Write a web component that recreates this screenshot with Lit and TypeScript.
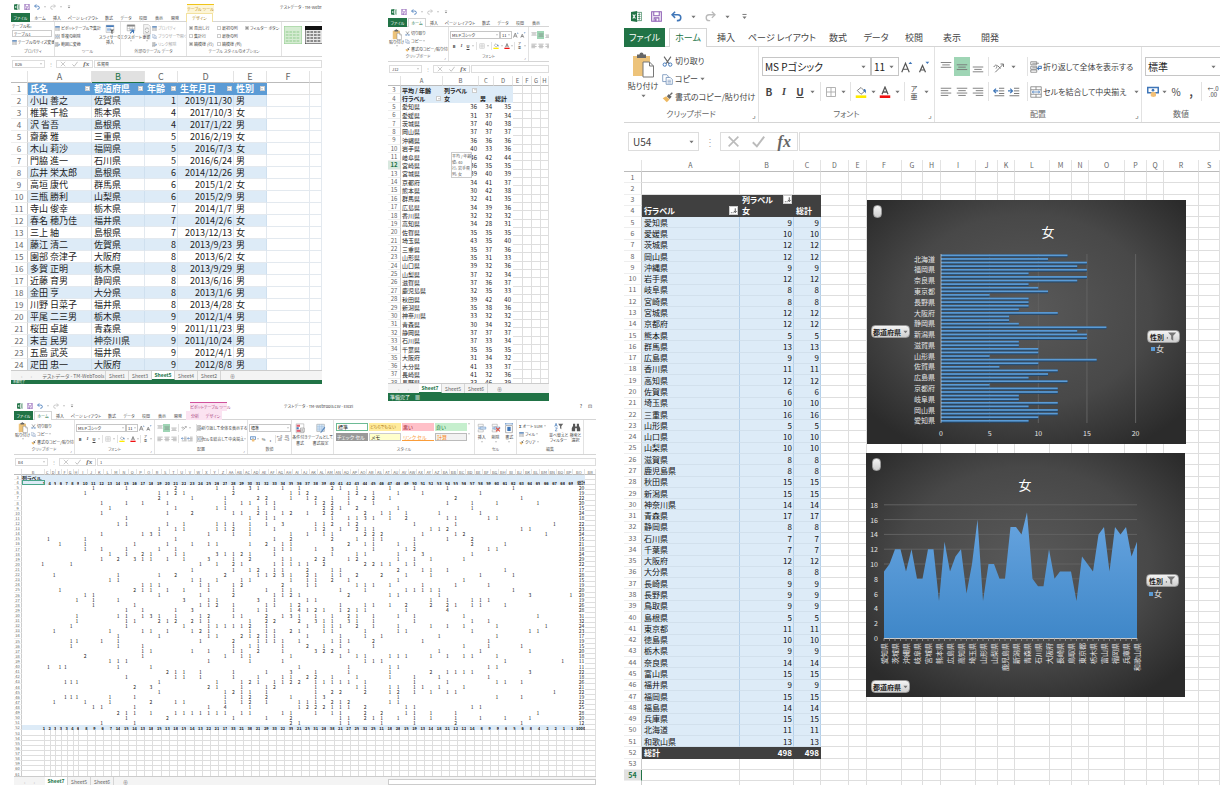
import { LitElement, html, svg, css, nothing } from "lit";
import { customElement } from "lit/decorators.js";
import { classMap } from "lit/directives/class-map.js";

type Person = [string, string, number, string, string];

const people: Person[] = [
  ["小山 善之", "佐賀県", 1, "2019/11/30", "男"],
  ["椎葉 千絵", "熊本県", 4, "2017/10/3", "女"],
  ["沢 省吾", "島根県", 4, "2017/1/22", "男"],
  ["齋藤 雅", "三重県", 5, "2016/2/19", "女"],
  ["木山 莉沙", "福岡県", 5, "2016/7/3", "女"],
  ["門脇 進一", "石川県", 5, "2016/6/24", "男"],
  ["広井 栄太郎", "島根県", 6, "2014/12/26", "男"],
  ["高垣 康代", "群馬県", 6, "2015/1/2", "女"],
  ["三瓶 勝利", "山梨県", 6, "2015/2/9", "男"],
  ["寺山 俊幸", "栃木県", 7, "2014/1/7", "男"],
  ["春名 穂乃佳", "福井県", 7, "2014/2/6", "女"],
  ["三上 紬", "島根県", 7, "2013/12/13", "女"],
  ["藤江 清二", "佐賀県", 8, "2013/9/23", "男"],
  ["園部 奈津子", "大阪府", 8, "2013/6/2", "女"],
  ["多賀 正明", "栃木県", 8, "2013/9/29", "男"],
  ["近藤 育男", "静岡県", 8, "2013/6/16", "男"],
  ["金田 亨", "大分県", 8, "2013/1/6", "男"],
  ["川野 日菜子", "福井県", 8, "2013/4/28", "女"],
  ["平尾 二三男", "栃木県", 9, "2012/1/4", "男"],
  ["桜田 卓雄", "青森県", 9, "2011/11/23", "男"],
  ["末吉 民男", "神奈川県", 9, "2011/10/24", "男"],
  ["五島 武英", "福井県", 9, "2012/4/1", "男"],
  ["疋田 忠一", "大阪府", 9, "2012/8/8", "男"],
];

const women: [string, number][] = [
  ["愛知県", 9], ["愛媛県", 10], ["茨城県", 12], ["岡山県", 12], ["沖縄県", 9], ["岩手県", 12],
  ["岐阜県", 8], ["宮崎県", 8], ["宮城県", 12], ["京都府", 12], ["熊本県", 5], ["群馬県", 13],
  ["広島県", 9], ["香川県", 11], ["高知県", 12], ["佐賀県", 6], ["埼玉県", 10], ["三重県", 16],
  ["山形県", 5], ["山口県", 10], ["山梨県", 10], ["滋賀県", 8], ["鹿児島県", 8], ["秋田県", 15],
  ["新潟県", 15], ["神奈川県", 14], ["青森県", 17], ["静岡県", 8], ["石川県", 7], ["千葉県", 7],
  ["大阪府", 12], ["大分県", 8], ["長崎県", 9], ["長野県", 9], ["鳥取県", 9], ["島根県", 5],
  ["東京都", 11], ["徳島県", 10], ["栃木県", 9], ["奈良県", 14], ["富山県", 15], ["福井県", 9],
  ["福岡県", 15], ["福島県", 14], ["兵庫県", 15], ["北海道", 11], ["和歌山県", 13],
];

const averages = [
  "36 34 35", "31 37 34", "37 40 38", "37 37 37", "36 36 36", "40 33 36", "46 42 44", "36 35 35",
  "39 40 39", "34 41 37", "30 42 38", "32 41 35", "34 39 36", "32 32 32", "34 28 31", "35 35 35",
  "43 35 40", "35 37 36", "35 31 33", "39 32 36", "37 32 34", "37 36 37", "32 35 33", "39 42 40",
  "35 38 36", "33 32 32", "30 34 32", "37 37 37", "37 33 34", "35 35 35", "31 34 32", "41 33 37",
  "41 32 36", "33 46 39",
].map((r) => r.split(" "));

/* One line per prefecture: ages that occur, "age:count" where the count is above one. */
const ageCounts = `11 15 21:2 26 28 30:3 31 34 36 40:2 41 43 47 50 54 62
10 19 20 21:2 22 28:2 35 36 37:2 42 43:2 45 48 51 58
19:2 23 27 31:2 32:2 35 37 38:2 40 42 44:2 45:2 47 55:2 63
12 15 17 20 27 29 30 32 33 38 39:2 40:2 42 45 54 57 60 65
13 21 26 27 31 33 39:2 40:2 41 43:2 48 57
12 20 23:2 28 29 31:2 32 34 35:2 37 39:2 40:2 44:2 46 47 49 53 58
15 30 32 33 40 42 43 44:3 45 47 49:2 54 55 59 60
14 15 20 22 26 27 28 30 32 34:3 38 39 40:2 42 43:2 50 55 67
19 21 22 26 27 28:2 30 33 38 39:2 41 43:2 44 45 52 53 54:2 63 64
12 17 18:3 19 25 28 30 35 37 39 40 44:2 45:2 46:2 51 55 56:2 66
4 10 21 33 35:2 40:2 43 45 46 50 54 57:2
6 10 16 20 23 25 26 30 32:2 34 35 42:2 44 45 48 50 57:2 61
10 12 15 19 21 33 34 35 38 40:3 45 49 50:2 59 60
13 15 17:2 18 21 22 26:3 27 28 29:2 30 33 40 43 44 48 51:3 57
12 14:2 16:3 17 18 20 22 25:3 28 30:2 34 35 38:2 39:2 42 43:2 48 50 52 56
1 8 24 26 28:2 29 33 34 35 36 37 39:2 44:2 45:2 46 47 49 50
23 28 30 31:2 33 34 37:2 40 41 48:2 51 52 54 61
5 14 19 21:2 27:2 31 32 33:2 34:3 35 37:2 38 40 41 43:2 46:2 49 52 58 62
13 14 23 24 26 29 30 35 37 38 40:2 42 48 56
17 18 19 24 25 28 29:2 34:2 37 38 43 44 45 47 51 55 59
6 16:2 17 18 20 22 25 28 32 34 35 41 44 49 50 51 52 53 62
10 11 19 24 28:2 33 34 35:2 36 42:2 47 48 53 64:3 69
9 11 14 22:3 25 26 31:3 33 37 38 52 54 57 58 59
11 16 24 25 26:2 28 32 33 35 36:2 41 44 45 47 49:2 52:2 54:2 55 57 58 61
15 17 21 23:3 28 31 32 35 36:4 37 38:2 39 41 42:2 43 44 49 54:4
9 14 15 17 18:3 19 21 24 25:2 28 29 32:2 34 35:3 36 38 40 42:2 43 45 48 50 56 65
9 15 16 19:2 20 21:2 23:2 24 25 30 32:2 33:2 36:2 38:3 39 40 42:3 43 45 50 57 59
8 15 22 25 26 27 28 29 30:2 32 37 39 40 41 43:2 45 48 52 54 56 60 66
5 13 17 18 20 23 24:2 25 30 32 33 35:2 36 39 40 44 48 49 57 64 65
14 19 25 26 29:2 30 31:2 32 33 37 41 44 46 53 60
8 9 12 14 24 28:2 31 32 33 34 36 40 41 42 45:2 51 59
8 14 17 28 30 31 34 37:2 39 41 45 56 59 63
17 18 23 25 28 29 31:2 34 38:3 39:2 40:2 42 53 58 64
10:2 17 27 29 30 35 41 43 44 47 48 49 52 54 56 57 60
13 14 15 25 30 34 44 45 46 61 68
4 6 7 14 18 36 42 47 48 59 60
20:2 21 22 24 28 32 35:3 38 42 47 52:2 54 55 56 57 64:3
15 21 22 24 28 31 34 35 37:2 38:2 40 43 47 50 53 59
7 8 9 19 26 29 30:2 31 33 34 35:2 36:2 38 39 40 41 42 44 50 54 60 61 63
16:2 18:3 25:2 26 29 32 33:2 38 43 44 47 48 50 51 53 56
19 27 28:2 29 30 32 38 40:2 41:2 44:2 47 48:2 50 52 54 55 67
7 8 9 13 16 27 29 30:2 32:2 35 38 39:3 48 60 63
5 10 13 18:2 21 22 27 29 30:2 32 36 37 38 40:2 41 42:2 47 48
11 12 16 25 27:4 30 36 37:2 38:2 39:2 40 41 42 44:2 49 50 57 58
14:2 15 16 18 21 22 23 24 25 26 27 29 30 34 35 38 40 41 44:2 46:2 49 50 52 55 65
15 20:2 28 32 35:2 41 42 44:2 45 46 48 50 52 55 58 61 64
12 16 35:2 36 41 42 46 50 55:2 63`
  .split("\n")
  .map((line) => new Map(line.split(" ").map((t) => {
    const [a, n] = t.split(":");
    return [Number(a), Number(n ?? 1)] as [number, number];
  })));

const ages = [1, ...Array.from({ length: 66 }, (_, i) => i + 4)];
const ageTotals =
  "1 2 3 3 3 4 6 8 9 6 7 14 15 14 13 18 15 13 18 15 14 13 22 21 17 33 21 38 21 29 33 22 35 21 25 31 28 38 21 27 25 32 25 11 18 28 15 19 13 14 18 21 12 12 14 8 9 9 6 5 6 8 4 2 2 1 1".split(" ");

const letter = (n: number): string =>
  n < 26 ? String.fromCharCode(65 + n) : letter(Math.floor(n / 26) - 1) + String.fromCharCode(65 + (n % 26));

const range = (from: number, to: number) => Array.from({ length: to - from + 1 }, (_, i) => from + i);

const pct = (weights: number[]) => {
  const sum = weights.reduce((a, b) => a + b, 0);
  return html`<colgroup>${weights.map((w) => html`<col style="width:${(w / sum) * 100}%">`)}</colgroup>`;
};

/* ---------- icons ---------- */
const ic = (body: unknown, cls = "") =>
  html`<svg class="ic ${cls}" viewBox="0 0 16 16" aria-hidden="true">${body}</svg>`;
const caret = html`<svg class="caret" viewBox="0 0 6 4" aria-hidden="true"><path d="M0.5 0.5h5L3 3.5z" fill="#777"/></svg>`;
const I = {
  excel: ic(svg`<path d="M0 1.5 9 0v16L0 14.5z" fill="#217346"/><path d="M9 2h6.5v12H9" fill="#fff" stroke="#217346"/><path d="M10 5h4M10 8h4M10 11h4M12 3v10" stroke="#217346" stroke-width=".9"/><path d="m2.6 5 3.8 6M6.4 5l-3.8 6" stroke="#fff" stroke-width="1.5"/>`),
  save: ic(svg`<path d="M1 1h14v14H1z" fill="#fff" stroke="#8e5fb5" stroke-width="1.6"/><path d="M4 1v6h8V1M4.5 15v-5h7v5" fill="none" stroke="#8e5fb5" stroke-width="1.5"/><path d="M6 11h2v4H6z" fill="#8e5fb5"/>`),
  undo: ic(svg`<path d="M2 5.5h8a4.2 4.2 0 0 1 0 8.500H8.500" fill="none" stroke="#3f76b8" stroke-width="2.200"/><path d="M6 1 1.500 5.500 6 10" fill="none" stroke="#3f76b8" stroke-width="2.200"/>`),
  redo: ic(svg`<path d="M14 5.500H6a4.200 4.200 0 0 0 0 8.500h1.500" fill="none" stroke="#b9b9b9" stroke-width="2"/><path d="m10 1 4.500 4.500L10 10" fill="none" stroke="#b9b9b9" stroke-width="2"/>`),
  more: ic(svg`<path d="M5 5h6" stroke="#777" stroke-width="1.400"/><path d="M5 8h6l-3 3.500z" fill="#777"/>`),
  paste: html`<svg class="big" viewBox="0 0 22 26" aria-hidden="true"><path d="M1 4h17v20H1z" fill="#edc37a"/><path d="M5 2.500h2.500a2 2 0 0 1 4 0H14V6H5z" fill="#666"/><path d="M11 10h6.500l4 4v11H11z" fill="#fff" stroke="#777"/><path d="M17.500 10v4h4" fill="none" stroke="#777"/></svg>`,
  cut: ic(svg`<path d="m3 1 7 10M13 1 6 11" stroke="#666" stroke-width="1.600"/><circle cx="4" cy="12.500" r="2.400" fill="none" stroke="#3f76b8" stroke-width="1.400"/><circle cx="12" cy="12.500" r="2.400" fill="none" stroke="#3f76b8" stroke-width="1.400"/>`),
  copy: ic(svg`<path d="M1 1h6l2 2v8H1z" fill="#fff" stroke="#5b7fae"/><path d="M6 5h6l3 3v7H6z" fill="#fff" stroke="#5b7fae"/><path d="M8 9h5M8 11h5M8 13h5" stroke="#5b7fae" stroke-width=".8"/>`),
  brush: ic(svg`<path d="m1 9 5-3 5 5-4 4z" fill="#edb860"/><path d="m7 6 3-3 4 4-3 3z" fill="#666"/><path d="m12 4 3-3" stroke="#666" stroke-width="2"/>`),
  grow: ic(svg`<path d="m1 15 5-12 5 12M3 11h6" fill="none" stroke="#555" stroke-width="1.600"/><path d="m10 4 2.500-3L15 4z" fill="#3f76b8"/>`),
  shrink: ic(svg`<path d="m2 15 4-9 4 9M3.500 12h5" fill="none" stroke="#555" stroke-width="1.600"/><path d="m10 1 2.500 3L15 1z" fill="#3f76b8"/>`),
  border: ic(svg`<path d="M2 2h12v12H2zM8 2v12M2 8h12" fill="none" stroke="#aaa" stroke-width="1.200"/>`),
  fill: ic(svg`<path d="m3 6 5-4 5 5-5 4z" fill="#fff" stroke="#777" stroke-width="1.200"/><path d="M12 4c3 0 3 3 2 6-1-2-1-3-3-3z" fill="#3f76b8"/><path d="M1 12.500h14V16H1z" fill="#ffeb00"/>`),
  color: ic(svg`<path d="m4 11 4-9.500L12 11M5.500 8h5" fill="none" stroke="#555" stroke-width="1.700"/><path d="M1 12.500h14V16H1z" fill="#f01010"/>`),
  al: (y: number, kind: string) => ic(svg`<path d=${[0, 1, 2, 3].slice(0, kind === "v" ? 3 : 4).map((k) => { const s = k % 2; const x = kind === "r" ? 1 + s * 4 : kind === "l" ? 1 : 1 + s * 2; return `M${x} ${y + k * 3.2}h${14 - s * 4}`; }).join("")} stroke="#777" stroke-width="1.200"/>`),
  orient: ic(svg`<path d="M1 8c3-5 6-2 3 2M6 6l4 4M3 15 14 4M14 4h-4M14 4v4" fill="none" stroke="#777" stroke-width="1.300"/>`),
  outdent: ic(svg`<path d="M8 3h7M8 6.500h7M8 10h7M2 13h13" stroke="#777" stroke-width="1.300"/><path d="M7 6.500H1M4 3.500l-3 3 3 3" fill="none" stroke="#3f76b8" stroke-width="1.600"/>`),
  indent: ic(svg`<path d="M8 3h7M8 6.500h7M8 10h7M2 13h13" stroke="#777" stroke-width="1.300"/><path d="M0 6.500h6M3 3.500l3 3-3 3" fill="none" stroke="#3f76b8" stroke-width="1.600"/>`),
  wrap: ic(svg`<path d="M1 1h8v4H1zM1 7h8v4H1zM1 12h8v3H1z" fill="none" stroke="#777"/><path d="M3 3h9M3 9h6" stroke="#777"/><path d="M11 7h4v3h-5M12 8l-2 2 2 2" fill="none" stroke="#3f76b8" stroke-width="1.400"/>`),
  merge: ic(svg`<path d="M1 1h14v14H1zM1 5h14M1 11h14M8 1v4M8 11v4" fill="none" stroke="#777"/><path d="M3 8h10M5 6.500 3 8l2 1.500M11 6.500 13 8l-2 1.500" fill="none" stroke="#3f76b8"/>`),
  money: ic(svg`<path d="M1 2h14v7H1z" fill="#fff" stroke="#3f76b8" stroke-width="2"/><circle cx="8" cy="5.500" r="1.800" fill="#3f76b8"/><path d="M5 9c0-1.500 7-1.500 7 0v4c0 2-7 2-7 0z" fill="#f2c078"/>`),
  filter: ic(svg`<path d="M3 2h12l-4.500 5v7l-3-2V7z" fill="#777"/><circle cx="2" cy="10" r="1" fill="#555"/>`),
  grid: ic(svg`<path d="M1 1h14v14H1z" fill="#fff" stroke="#888"/><path d="M1 1h14v4H1z" fill="#3f76b8"/><path d="M1 8h14M1 11.500h14M6 5v10M11 5v10" stroke="#999"/>`),
  slicer: html`<svg class="big" viewBox="0 0 22 26" aria-hidden="true"><path d="M2 3h18v17H2z" fill="#fff" stroke="#888"/><path d="M2 3h18v4H2z" fill="#3f76b8"/><path d="M4 10h10M4 13h10M4 16h8" stroke="#8ab0dc" stroke-width="2"/><path d="M11 13h10l-4 5v6l-3-2v-4z" fill="#666"/></svg>`,
  export: html`<svg class="big" viewBox="0 0 22 26" aria-hidden="true"><path d="M2 2h18v14H2z" fill="#fff" stroke="#777"/><path d="M2 2h18v4H2z" fill="#888"/><path d="M2 11h18M8 6v10M14 6v10" stroke="#999"/><path d="M9 14h8v8M9 22l8-8" fill="none" stroke="#3f76b8" stroke-width="2.500"/></svg>`,
  refresh: html`<svg class="big" viewBox="0 0 22 26" aria-hidden="true"><path d="M3 1h11l5 5v18H3z" fill="#f3f3f3" stroke="#bbb" stroke-width="1.500"/><path d="M7 14a4 4 0 0 1 8-1M15 16a4 4 0 0 1-8 1" fill="none" stroke="#aaa" stroke-width="2"/></svg>`,
  cond: html`<svg class="big" viewBox="0 0 22 26" aria-hidden="true"><path d="M2 2h18v21H2z" fill="#fff" stroke="#888"/><path d="M3 4h8v5H3z" fill="#e06070"/><path d="M3 10h5v5H3z" fill="#3f76b8"/><path d="M3 16h10v5H3z" fill="#e06070"/><path d="M12 12h9v9h-9z" fill="#fff" stroke="#555"/><path d="M14 15h5M14 18h5" stroke="#555"/></svg>`,
  brushTable: html`<svg class="big" viewBox="0 0 22 26" aria-hidden="true"><path d="M1 3h18v17H1z" fill="#dcebf7" stroke="#888"/><path d="M1 8h18M1 12h18M1 16h18M7 3v17M13 3v17" stroke="#8ab0dc"/><path d="m9 24 4-2 8-11-2-2-8 11z" fill="#5b8ac0"/></svg>`,
  cells: (x: boolean) => html`<svg class="big" viewBox="0 0 22 26" aria-hidden="true"><path d="M2 3h12v5H2zM2 16h12v5H2z" fill="#fff" stroke="#888"/><path d="M7 9.500h13v5H7z" fill="#d6e5f5" stroke="#3f76b8"/><path d="M2 12h4" stroke="#3f76b8" stroke-width="2"/>${x ? svg`<path d="m11 11 9 9M20 11l-9 9" stroke="#e04b3c" stroke-width="2.500"/>` : nothing}</svg>`,
  format: html`<svg class="big" viewBox="0 0 22 26" aria-hidden="true"><path d="M3 6h16v17H3z" fill="#fff" stroke="#888" stroke-width="1.500"/><path d="M7 9h8v10H7z" fill="#3f76b8"/><path d="M3 2h16M3 0v4M19 0v4" stroke="#3f76b8" stroke-width="1.500"/></svg>`,
  sort: html`<svg class="big" viewBox="0 0 22 26" aria-hidden="true"><path d="m1 11 3-8 3 8M2 8h4M2 14h5l-5 7h5" fill="none" stroke="#3f76b8" stroke-width="1.500"/><path d="M9 4h12l-4.500 6v7l-3-2v-5z" fill="#666"/></svg>`,
  find: html`<svg class="big" viewBox="0 0 22 26" aria-hidden="true"><path d="M4 4h5v5l1 2h2l1-2V4h5v5l3 6v7h-8v-7h-4v7H1v-7l3-6z" fill="#555"/></svg>`,
  x: ic(svg`<path d="m2 2 12 12M14 2 2 14" stroke="#bbb" stroke-width="2"/>`),
  ok: ic(svg`<path d="m1 9 5 5L15 2" fill="none" stroke="#bbb" stroke-width="2.400"/>`),
  sorted: ic(svg`<path d="M2 13h2M6 13h2M12 3v8M9 9l3 4 3-4" fill="none" stroke="#444" stroke-width="2"/>`),
};

@customElement("app-root")
export class AppRoot extends LitElement {
  static styles = css`
    :host { display: block; background: #fff; font-family: "Noto Sans CJK JP", "Noto Sans", sans-serif; color: #444; font-feature-settings: "palt"; }
    * { box-sizing: border-box; }
    button, input, select { font: inherit; font-feature-settings: inherit; color: inherit; background: none; border: 0; margin: 0; padding: 0; min-width: 0; border-radius: 0; appearance: none; display: block; }
    button { display: flex; align-items: center; justify-content: center; white-space: nowrap; }
    .page { display: grid; grid-template-columns: minmax(0, 1fr) minmax(0, 1fr); gap: 28px; overflow: hidden; }
    .top { display: grid; grid-template-columns: minmax(0, 311fr) minmax(0, 161fr); gap: 66px; padding: 0 47px 0 11px; height: 401px; align-items: start; }
    .two { padding-top: 5px; }
    .three { padding-left: 14px; }
    .win { overflow: hidden; font-size: 4px; line-height: 6px; position: relative; }
    .four { padding-top: 5px; font-size: 8px; line-height: 12px; }
    .ic { width: 6px; height: 6px; flex: none; display: block; }
    .big { width: 10px; height: 11px; display: block; flex: none; }
    .caret { width: 2px; height: 2px; flex: none; display: block; }
    .lines .ic { width: 5px; height: 5px; }
    .four .ic { width: 11px; height: 11px; }
    .four .big { width: 22px; height: 26px; }
    .four .caret { width: 5px; height: 4px; }

    /* title row */
    .quick { display: grid; grid-template-columns: 176px auto minmax(0, 1fr); height: 13px; align-items: center; }
    .three .quick { height: 10px; }
    .four .quick { height: 23px; grid-template-columns: 176px; }
    .qi { display: flex; gap: 4px; padding-left: 3px; align-items: center; }
    .four .qi { gap: 9px; padding-left: 7px; }
    .ctx { align-self: end; height: 9px; width: 27px; border-top: 1px solid #f0c419; background: #fdf5d6; color: #b8860b; text-align: center; white-space: nowrap; line-height: 8px; }
    .three .ctx { width: 37px; border-color: #d0529c; background: #fbe3f1; color: #a8407c; }
    .title { white-space: nowrap; padding-left: 66px; display: flex; }
    .three .title { padding-left: 57px; justify-content: space-between; }
    .wc { display: flex; gap: 6px; padding-right: 4px; font-size: 5px; }

    /* ribbon tabs */
    .tabs { display: flex; height: 9px; border-bottom: 1px solid #d5d5d5; }
    .tabs button { flex: none; height: 9px; width: 16px; }
    .tabs .w18 { width: 18px; }
    .tabs .w36 { width: 36px; }
    .tabs .file { background: #217346; color: #fff; width: 19px; margin-right: 1px; }
    .tabs .on { background: #fff; color: #217346; border: 1px solid #d5d5d5; border-bottom: 0; }
    .tabs .gold { color: #a87b00; width: 27px; border-color: #f3e2a0; margin-left: 3px; }
    .tabs .pink { background: #fbe3f1; width: 18px; color: #a8407c; }
    .four .tabs { height: 19px; font-size: 9px; }
    .four .tabs button { height: 19px; width: 38px; }
    .four .tabs .w36 { width: 74px; }
    .four .tabs .w18 { width: 38px; }
    .four .tabs .file { width: 41px; margin-right: 4px; }

    /* ribbon */
    .ribbon { display: flex; height: 35px; border-bottom: 1px solid #d5d5d5; }
    .four .ribbon { height: 76px; }
    .group { flex: none; display: flex; flex-direction: column; border-right: 1px solid #e2e2e2; position: relative; overflow: hidden; }
    .group > .body { flex: 1; min-height: 0; }
    .cap { height: 8px; text-align: center; color: #666; white-space: nowrap; }
    .four .cap { height: 14px; }
    .cap.launch::after { content: "⌟"; position: absolute; right: 2px; bottom: 1px; }
    .clip { width: 61px; } .font { width: 80px; } .align { width: 93px; } .num { width: 44px; }
    .four .clip { width: 135px; } .four .font { width: 176px; } .four .align { width: 207px; } .four .num { width: auto; flex: 1; border: 0; }
    .clip .body { display: grid; grid-template-columns: 17px 1fr; padding-top: 2px; }
    .four .clip .body { grid-template-columns: 38px 1fr; padding-top: 5px; }
    .tall { flex-direction: column; justify-content: flex-start; line-height: 5px; }
    .four .tall { gap: 2px; line-height: 12px; }
    .lines { display: grid; grid-auto-rows: 8px; align-content: start; min-width: 0; }
    .lines button, .lines label { display: flex; gap: 1px; align-items: center; justify-content: flex-start; white-space: nowrap; }
    .four .lines { grid-auto-rows: 18px; }
    .four .lines button { gap: 2px; }
    .rows { display: grid; grid-auto-rows: 8px; gap: 3px; padding: 4px 0 0 1px; align-content: start; }
    .four .rows { grid-auto-rows: 19px; gap: 6px; padding: 10px 0 0 3px; }
    .r { display: grid; align-items: center; justify-items: center; }
    .r > * { height: 100%; }
    .r .ic { height: 6px; } .r > .caret { height: 2px; }
    .four .r .ic { height: 12px; width: 12px; } .four .r > .caret { height: 4px; }
    .f1 { grid-template-columns: 50px 12px 8px 6px; }
    .f2 { grid-template-columns: 8px 7px 6px 4px 3px 8px 4px 2px 8px 3px 7px 3px 3px 7px 4px; }
    .four .f1 { grid-template-columns: 109px 28px 16px 17px; }
    .four .f2 { grid-template-columns: 14px 16px 16px 9px 6px 16px 8px 6px 16px 8px 16px 8px 6px 14px 10px; }
    .a { grid-template-columns: 7px 7px 7px 3px 7px 6px 2px 2px 5px 40px 5px; }
    .four .a { grid-template-columns: 16px 16px 16px 5px 15px 15px 5px 3px 14px 88px 1fr; }
    .a .t { justify-self: start; }
    .n1 { grid-template-columns: 1fr; }
    .n2 { grid-template-columns: 7px 4px 7px 7px 2px 7px 7px; }
    .four .n2 { grid-template-columns: 16px 6px 18px 12px 8px 16px; }
    .four .n2 > :nth-child(7) { display: none; }
    .dec { line-height: 3px; font-size: 3px; flex-direction: column; }
    .four .dec { line-height: 6px; font-size: 6px; }
    .sep { border-left: 1px solid #e2e2e2; }
    .green { background: #9fd5b5; width: 100%; }
    .sel { display: grid; width: 100%; align-items: center; border: 1px solid #c6c6c6; position: relative; background: #fff; color: #222; }
    .sel select { width: 100%; height: 100%; padding-left: 1px; line-height: normal; }
    .sel .caret { position: absolute; right: 1px; }
    .four .sel { font-size: 10px; } .four .sel select { padding-left: 2px; } .four .sel .caret { right: 4px; }
    .b { font-weight: 700; } .it { font-style: italic; font-weight: 700; font-family: "Liberation Serif", serif; } .un { text-decoration: underline; font-weight: 700; }
    .ruby { line-height: 4px; flex-direction: column; font-size: 3px; }
    .four .ruby { line-height: 8px; font-size: 7px; }
    .four .f2 .b, .four .f2 .it, .four .f2 .un, .four .n2 button:not(.dec) { font-size: 10px; }

    /* extra groups */
    .g44 { width: 44px; padding-left: 1px; } .g66 { width: 66px; } .g95 { width: 95px; }
    .g44 input { border: 1px solid #ccc; height: 7px; width: 40px; padding-left: 1px; }
    .split { display: grid; padding-top: 2px; }
    .s1 { grid-template-columns: 45px 20px; } .s2 { grid-template-columns: 20px 11px 34px; } .s3 { grid-template-columns: 28px 28px 1fr; padding-left: 2px; }
    .dim { color: #aaa; }
    .ck { appearance: none; width: 4px; height: 4px; border: 1px solid #ccc; flex: none; }
    .ck:checked { background: #999; }
    .thumbs { display: flex; gap: 3px; padding: 4px 0 0 2px; flex: 1; overflow: hidden; }
    .th { width: 18px; height: 18px; flex: none; }
    .cf { width: 42px; } .cf .body, .cl .body { display: flex; padding-top: 3px; }
    .cf .tall, .cl .tall { flex: 1; gap: 1px; }
    .cf .tall:first-child { flex: none; width: 16px; }
    .sty { width: 141px; }
    .gallery { display: grid; grid-template-columns: repeat(4, 32px) 5px; grid-auto-rows: 8px; gap: 2px 1px; padding: 3px 0 0 2px; font-size: 5px; }
    .gallery button { justify-content: flex-start; padding-left: 1px; }
    .gallery .gy { font-size: 4px; }
    .gn { border: 1px solid #6dbb95; color: #222; } .gy { background: #ffeb9c; color: #b07b20; } .gr { background: #ffc0c8; color: #a02030; } .gg { background: #c6efce; color: #1c7a36; }
    .gc { background: #999; color: #fff; } .gm { background: #ffffcc; color: #222; border: 1px solid #ccc; } .gl { color: #fa9d3a; border-bottom: 1px solid #fa9d3a; } .gk { background: #f2f2f2; border: 1px solid #bbb; color: #fa7d00; }
    .cl { width: 42px; } .ed { width: 67px; }
    .ed .body { display: grid; grid-template-columns: 30px 19px 1fr; padding: 2px 0 0 2px; }

    /* formula bar */
    .fx { display: grid; grid-template-columns: 33px 9px 37px minmax(0, 1fr); gap: 1px; padding: 3px 0 3px 1px; height: 14px; }
    .fx > * { border: 1px solid #ddd; height: 8px; }
    .fx > .dots { border: 0; display: grid; place-items: center; color: #aaa; }
    .fx .name { position: relative; display: grid; align-items: center; }
    .fx .name .caret { position: absolute; right: 2px; }
    .fx input { padding-left: 2px; width: 100%; height: 100%; line-height: 6px; }
    .fx > input { height: 8px; }
    .btns { display: flex; align-items: center; justify-content: space-around; }
    .f { font-style: italic; font-family: "Liberation Serif", serif; font-size: 7px; font-weight: 700; color: #666; }
    .four .fx { grid-template-columns: 71px 19px 78px minmax(0, 1fr); padding: 9px 0 9px 4px; height: 37px; font-size: 10px; }
    .four .fx > * { height: 19px; }
    .four .btns .ic { width: 13px; height: 13px; } .four .f { font-size: 16px; }
    .four .fx .caret { right: 4px; } .four .fx input { padding-left: 4px; }

    /* sheets */
    .view { overflow: hidden; position: relative; }
    table { border-spacing: 0; table-layout: fixed; width: 100%; }
    th, td { padding: 0; white-space: nowrap; overflow: hidden; text-align: left; font-weight: 400; }
    .sheet td { border-right: 1px solid #dedede; border-bottom: 1px solid #dedede; color: #222; }
    .sheet thead th { text-align: center; border-right: 1px solid #e3e3e3; border-bottom: 1px solid #bbb; color: #666; }
    .sheet tbody th { text-align: center; border-right: 1px solid #ccc; border-bottom: 1px solid #eee; color: #666; }
    .sheet td.n { text-align: right; }
    .v1 { height: 299px; }
    .v1 table { font-size: 9px; line-height: 11px; color: #222; }
    .v1 tr { height: 12px; } .v1 th { font-size: 8px; }
    .v1 thead th { font-size: 9px; }
    .v1 td { padding: 0 1px 0 2px; border-color: #e3e9ef; }
    .v1 .hd td { background: #5b9bd5; color: #fff; font-weight: 700; border-color: #5b9bd5; }
    .v1 .hd td.p { background: #fff; border-color: #e3e3e3; }
    .v1 .z td:not(.p) { background: #ddebf7; border-right-color: #cfe0ef; }
    .v1 thead .cur { background: #e1e1e1; color: #217346; border-bottom-color: #217346; }
    .cell { display: flex; justify-content: space-between; align-items: center; }
    .dd { width: 5px; height: 5px; background: #fff; display: grid; place-items: center; border: 1px solid #ccc; flex: none; }
    .v2 { height: 307px; }
    .v2 table { height: 311px; font-size: 6px; line-height: 7px; }
    .v2 thead tr { height: 10px; }
    .v2 th { font-size: 6px; }
    .v2 td.q { border: 0; padding: 0 2px 0 1px; } .v2 .pv td.q { background: #ddebf7; font-weight: 700; }
    .v2 tbody .cur { background: #d8e8df; color: #217346; font-weight: 700; }
    .tip { position: absolute; left: 63px; top: 76px; background: #fff; border: 1px solid #ccc; font-size: 4px; line-height: 6px; white-space: nowrap; color: #555; }
    .v3 { height: 307px; }
    .v3 table { height: 308px; font-size: 5px; line-height: 4px; }
    .v3 thead tr { height: 6px; }
    .v3 td { text-align: right; padding-right: 1px; } .v3 td.q { border: 0; }
    .v3 .pv td.q { background: #ddebf7; font-weight: 700; padding-right: 0; } .v3 .pv td.lb { text-align: left; }
    .v3 .pv td { font-size: 4px; } .v3 .pv td.lb { font-size: 5px; overflow: visible; }
    .v3 th, .v3 thead th { font-size: 4px; }
    .v3 td.act { background: #cdeee6; outline: 1px solid #4aa58a; outline-offset: -1px; }
    .v4 { height: 625px; }
    .v4 table { height: 633px; font-size: 8px; line-height: 9px; }
    .v4 thead tr { height: 12px; }
    .v4 th { font-size: 7px; }
    .v4 td.q { padding: 0 1px 0 2px; background: #ddebf7; border-color: #b4d0ea; border-bottom-color: #d2e0ec; color: #111; }
    .v4 .pv td.q { background: #404040; color: #fff; font-weight: 700; border-color: #404040; }
    .v4 .dd { width: 9px; height: 9px; }
    .v4 .dd .ic { width: 7px; height: 7px; }
    .v4 tbody .cur { background: #e1e1e1; color: #217346; font-weight: 700; border-right-color: #217346; }
    .chart { position: absolute; left: 243px; width: 319px; height: 244px; margin: 0; }
    .c1 { top: 40px; } .c2 { top: 293px; left: 242px; }
    .chart svg.plot { display: block; width: 319px; height: 244px; }
    .chart button { position: absolute; background: linear-gradient(#f4f4f4, #cfcfcf); border: 1px solid #999; border-radius: 4px; color: #222; font-size: 7px; font-weight: 700; height: 13px; gap: 2px; }
    .pill { left: 6px; top: 5px; width: 9px; }
    .k1 { left: 4px; top: 125px; width: 39px; } .k2 { left: 5px; top: 227px; width: 39px; }
    .l1 { left: 280px; top: 130px; width: 33px; } .l2 { left: 280px; top: 121px; width: 33px; }
    .chart text { fill: #e4e4e4; font-size: 7px; } .chart .ti { font-size: 13px; fill: #fff; } .chart .lg { font-size: 8px; }

    /* sheet tabs and status */
    .st { display: flex; height: 10px; background: #f4f4f4; border-top: 1px solid #ccc; align-items: stretch; font-size: 5px; color: #666; }
    .st button { width: 23px; border-right: 1px solid #d5d5d5; flex: none; }
    .st .nav { width: 31px; border: 0; gap: 8px; color: #bbb; }
    .st .long { width: 64px; }
    .st .on { background: #fff; color: #217346; font-weight: 700; border-bottom: 1px solid #217346; }
    .st .add { border: 0; }
    .bar { flex: 1; margin: 2px 0 1px auto; max-width: 208px; border: 1px solid #ccc; background: #fff; }
    .status { background: #217346; color: #fff; height: 8px; padding-left: 2px; line-height: 8px; font-size: 5px; }
    .one .status { height: 4px; line-height: 4px; font-size: 3px; }
  `;

  private quick(extra: unknown = nothing) {
    return html`<header class="quick"><div class="qi">${I.excel}${I.save}${I.undo}${caret}${I.redo}${caret}${I.more}</div>${extra}</header>`;
  }

  private tabs(names: string[], on: string, extra: unknown = nothing) {
    const w: Record<string, string> = { ホーム: "w18", "ページ レイアウト": "w36", データ: "w18" };
    return html`<nav class="tabs"><button class="file">ファイル</button>${names.map(
      (n) => html`<button class="${w[n] ?? ""} ${n === on ? "on" : ""}">${n}</button>`)}${extra}</nav>`;
  }

  private select(label: string, value: string) {
    return html`<label class="sel"><select aria-label=${label}><option>${value}</option></select>${caret}</label>`;
  }

  private home(id: string) {
    return html`
      <section class="group clip"><div class="body">
        <button class="tall">${I.paste}<span>貼り付け</span>${caret}</button>
        <div class="lines"><button>${I.cut}切り取り</button><button>${I.copy}コピー ${caret}</button><button>${I.brush}書式のコピー/貼り付け</button></div>
      </div><div class="cap launch">クリップボード</div></section>
      <section class="group font"><div class="body rows">
        <div class="r f1">${this.select("フォント " + id, "MS Pゴシック")}${this.select("サイズ " + id, "11")}<button aria-label="拡大">${I.grow}</button><button aria-label="縮小">${I.shrink}</button></div>
        <div class="r f2"><button class="b">B</button><button class="it">I</button><button class="un">U</button>${caret}<span class="sep"></span>${I.border}${caret}<span class="sep"></span>${I.fill}${caret}${I.color}${caret}<span class="sep"></span><button class="ruby"><span>ア</span><span>亜</span></button>${caret}</div>
      </div><div class="cap launch">フォント</div></section>
      <section class="group align"><div class="body rows">
        <div class="r a"><button aria-label="上揃え">${I.al(2, "v")}</button><button class="green" aria-label="上下中央">${I.al(5, "v")}</button><button aria-label="下揃え">${I.al(8, "v")}</button><span class="sep"></span>${I.orient}${caret}<span></span><span class="sep"></span>${I.wrap}<button class="t">折り返して全体を表示する</button></div>
        <div class="r a"><button aria-label="左揃え">${I.al(3, "l")}</button><button aria-label="中央">${I.al(3, "c")}</button><button aria-label="右揃え">${I.al(3, "r")}</button><span class="sep"></span>${I.outdent}${I.indent}<span></span><span class="sep"></span>${I.merge}<button class="t">セルを結合して中央揃え</button>${caret}</div>
      </div><div class="cap launch">配置</div></section>`;
  }

  private number(id: string) {
    return html`<section class="group num"><div class="body rows">
      <div class="r n1">${this.select("表示形式 " + id, "標準")}</div>
      <div class="r n2">${I.money}${caret}<button>%</button><button class="b">,</button><span class="sep"></span><button class="dec"><span>←.0</span><span>.00</span></button><button class="dec"><span>.00</span><span>→.0</span></button></div>
    </div><div class="cap">数値</div></section>`;
  }

  private formula(name: string, value: string) {
    return html`<div class="fx"><div class="name"><input aria-label="名前ボックス" .value=${name}>${caret}</div><span class="dots">⋮</span>
      <div class="btns">${I.x}${I.ok}<span class="f">fx</span></div><input aria-label="数式" .value=${value}></div>`;
  }

  private head(labels: string[], cur = "") {
    return html`<thead><tr><th></th>${labels.map((l) => html`<th class=${l === cur ? "cur" : ""}>${l}</th>`)}</tr></thead>`;
  }

  private sheetTabs(names: string[], on: string, extra: unknown = nothing) {
    return html`<nav class="st"><button class="nav" aria-label="シート移動"><span>‹</span><span>›</span></button>${names.map(
      (n) => html`<button class=${classMap({ on: n === on, long: n.length > 8 })}>${n}</button>`)}<button class="add">⊕</button>${extra}</nav>`;
  }

  private check(text: string, on: boolean) {
    return html`<label><input class="ck" type="checkbox" .checked=${on}>${text}</label>`;
  }

  private thumb(dark: boolean) {
    const c = dark ? "#222" : "#8cc98a";
    return html`<svg class="th" viewBox="0 0 20 18" preserveAspectRatio="none" aria-hidden="true"><path d="M0 0h20v18H0z" fill=${dark ? "#e8e8e8" : "#d5ecd2"} stroke=${c}/>${dark ? svg`<path d="M0 0h20v4H0z" fill="#111"/>` : nothing}<path d="M2 6h16M2 9h16M2 12h16M2 15h16" stroke=${c} stroke-dasharray="3 1"/></svg>`;
  }

  private tableWindow() {
    const dd = html`<span class="dd">${caret}</span>`;
    return html`<section class="win one">
      ${this.quick(html`<span class="ctx">テーブル ツール</span><span class="title">テストデータ - TM-WebT</span>`)}
      ${this.tabs(["ホーム", "挿入", "ページ レイアウト", "数式", "データ", "校閲", "表示", "開発"], "", html`<button class="on gold">デザイン</button>`)}
      <div class="ribbon">
        <section class="group g44"><div class="body lines"><label for="tn">テーブル名:</label><input id="tn" .value=${"テーブル1"}><button>${I.grid}テーブルのサイズ変更</button></div><div class="cap">プロパティ</div></section>
        <section class="group g66"><div class="body split s1"><div class="lines"><button>${I.grid}ピボットテーブルで集計</button><button>${I.merge}重複の削除</button><button>${I.wrap}範囲に変換</button></div><button class="tall">${I.slicer}<span>スライサーの</span><span>挿入</span></button></div><div class="cap">ツール</div></section>
        <section class="group g66"><div class="body split s2"><button class="tall">${I.export}<span>エクスポート</span>${caret}</button><button class="tall">${I.refresh}<span>更新</span>${caret}</button><div class="lines dim"><button>${I.grid}プロパティ</button><button>${I.copy}ブラウザーで開く</button><button>${I.wrap}リンク解除</button></div></div><div class="cap">外部のテーブル データ</div></section>
        <section class="group g95"><div class="body split s3">
          <div class="lines">${this.check("見出し行", true)}${this.check("集計行", false)}${this.check("縞模様 (行)", true)}</div>
          <div class="lines">${this.check("最初の列", false)}${this.check("最後の列", false)}${this.check("縞模様 (列)", false)}</div>
          <div class="lines">${this.check("フィルター ボタン", true)}</div></div><div class="cap">テーブル スタイルのオプション</div></section>
        <div class="thumbs">${this.thumb(false)}${this.thumb(true)}</div>
      </div>
      ${this.formula("B26", "佐賀県")}
      <div class="view v1"><table class="sheet">${pct([17, 64, 53, 33, 56, 33, 43, 12])}
        ${this.head(["A", "B", "C", "D", "E", "F", ""], "B")}
        <tbody>
          <tr class="hd"><th>1</th>${["氏名", "都道府県", "年齢", "生年月日", "性別"].map((t) => html`<td><div class="cell">${t}${dd}</div></td>`)}<td class="p"></td><td class="p"></td></tr>
          ${people.map((p, i) => html`<tr class=${i % 2 ? "" : "z"}><th>${i + 2}</th><td>${p[0]}</td><td>${p[1]}</td><td class="n">${p[2]}</td><td class="n">${p[3]}</td><td>${p[4]}</td><td class="p"></td><td class="p"></td></tr>`)}
        </tbody></table></div>
      ${this.sheetTabs(["テストデータ - TM-WebTools", "Sheet1", "Sheet3", "Sheet5", "Sheet4", "Sheet2"], "Sheet5")}
      <footer class="status">準備完了</footer>
    </section>`;
  }

  private averageWindow() {
    const rest = range(1, 4).map(() => html`<td></td>`);
    return html`<section class="win two">
      ${this.quick()}
      ${this.tabs(["ホーム", "挿入", "ページ レイアウト", "数式", "データ", "校閲", "表示"], "ホーム")}
      <div class="ribbon">${this.home("2")}</div>
      ${this.formula("J12", "")}
      <div class="view v2"><table class="sheet">${pct([13, 42, 36, 15, 19, 10, 9, 9, 8])}
        ${this.head(["A", "B", "C", "D", "E", "F", "G", "H"])}
        <tbody>
          <tr class="pv"><th>3</th><td class="q">平均 / 年齢</td><td class="q"><div class="cell">列ラベル<span class="dd">${caret}</span></div></td><td class="q"></td><td class="q"></td>${rest}</tr>
          <tr class="pv"><th>4</th><td class="q"><div class="cell">行ラベル<span class="dd">${caret}</span></div></td><td class="q">女</td><td class="q">男</td><td class="q">総計</td>${rest}</tr>
          ${averages.map((r, i) => html`<tr><th class=${i === 7 ? "cur" : ""}>${i + 5}</th><td class="q">${women[i][0]}</td>${r.map((v) => html`<td class="q n">${v}</td>`)}${rest}</tr>`)}
        </tbody></table>
        <div class="tip" role="tooltip">平均 / 年齢<br>値: 40<br>行: 岩手県<br>列: 女</div></div>
      ${this.sheetTabs(["Sheet7", "Sheet5", "Sheet6"], "Sheet7")}
      <footer class="status">準備完了　▦</footer>
    </section>`;
  }

  private ageWindow() {
    const weights = [8, 23, ...range(1, 6).map(() => 5.7), ...range(1, 60).map(() => 8.23), 12, 10];
    const blank = range(0, 68);
    return html`<section class="win three">
      ${this.quick(html`<span class="ctx">ピボットテーブル ツール</span><span class="title"><span>テストデータ - TM-WebTools.csv - Excel</span><span class="wc"><span>?</span><span>⊡</span></span></span>`)}
      ${this.tabs(["ホーム", "挿入", "ページ レイアウト", "数式", "データ", "校閲", "表示", "開発"], "ホーム", html`<button class="pink">分析</button><button class="pink">デザイン</button>`)}
      <div class="ribbon">${this.home("3")}${this.number("3")}
        <section class="group cf"><div class="body"><button class="tall">${I.cond}<span>条件付き</span><span>書式</span></button><button class="tall">${I.brushTable}<span>テーブルとして</span><span>書式設定</span></button></div></section>
        <section class="group sty"><div class="body gallery">
          <button class="gn">標準</button><button class="gy">どちらでもない</button><button class="gr">悪い</button><button class="gg">良い</button><span>${caret}</span>
          <button class="gc">チェック セル</button><button class="gm">メモ</button><button class="gl">リンク セル</button><button class="gk">計算</button><span>${caret}</span>
        </div><div class="cap">スタイル</div></section>
        <section class="group cl"><div class="body"><button class="tall">${I.cells(false)}<span>挿入</span>${caret}</button><button class="tall">${I.cells(true)}<span>削除</span>${caret}</button><button class="tall">${I.format}<span>書式</span>${caret}</button></div><div class="cap">セル</div></section>
        <section class="group ed"><div class="body"><div class="lines"><button><b>Σ</b> オート SUM ${caret}</button><button>${I.grid}フィル ${caret}</button><button>${I.brush}クリア ${caret}</button></div><button class="tall">${I.sort}<span>並べ替えと</span><span>フィルター</span></button><button class="tall">${I.find}<span>検索と</span><span>選択</span></button></div><div class="cap">編集</div></section>
      </div>
      ${this.formula("B4", "1")}
      <div class="view v3"><table class="sheet">${pct(weights)}
        ${this.head(range(1, 69).map(letter))}
        <tbody>
          <tr class="pv"><th>3</th><td class="q lb">列ラベル</td>${range(1, 67).map(() => html`<td class="q"></td>`)}<td></td></tr>
          <tr class="pv"><th>4</th>${ages.map((a) => html`<td class="q ${a === 1 ? "act" : ""}">${a}</td>`)}<td class="q">総計</td><td></td></tr>
          ${ageCounts.map((m, i) => html`<tr><th>${i + 5}</th>${ages.map((a) => html`<td class="q">${m.get(a) ?? nothing}</td>`)}<td class="q">${[...m.values()].reduce((x, y) => x + y, 0)}</td><td></td></tr>`)}
          <tr class="pv"><th>52</th>${ageTotals.map((t) => html`<td class="q">${t}</td>`)}<td class="q">1000</td><td></td></tr>
          ${range(53, 61).map((n) => html`<tr><th>${n}</th>${blank.map(() => html`<td></td>`)}</tr>`)}
        </tbody></table></div>
      ${this.sheetTabs(["Sheet7", "Sheet5", "Sheet6"], "Sheet7", html`<span class="bar"></span>`)}
    </section>`;
  }

  private backdrop(id: string) {
    return svg`<defs><radialGradient id=${id} cx="50%" cy="45%" r="65%"><stop offset="0" stop-color="#595959"/><stop offset=".6" stop-color="#484848"/><stop offset="1" stop-color="#2b2b2b"/></radialGradient>
      <linearGradient id=${id + "a"} x1="0" y1="0" x2="0" y2="1"><stop offset="0" stop-color="#68a5e0"/><stop offset="1" stop-color="#3f87c8"/></linearGradient></defs>
      <rect width="319" height="244" fill="url(#${id})"/>`;
  }

  private barChart() {
    const x0 = 74, unit = 9.73, top = 54, pitch = 169 / 47;
    const ry = (i: number) => top + (46 - i) * pitch;
    return html`<figure class="chart c1"><svg class="plot" viewBox="0 0 319 244">${this.backdrop("g1")}
      ${[5, 10, 15, 20].map((v) => svg`<path d="M${x0 + v * unit} ${top}V223" stroke="#626262"/>`)}
      ${women.map(([, v], i) => svg`<rect x=${x0} y=${ry(i) + 0.6} width=${v * unit} height="2.700" fill="#23486c"/><rect x=${x0} y=${ry(i) + 0.5} width=${v * unit} height="1.700" fill="#5b9bd5"/>`)}
      <path d="M${x0} ${top}V223" stroke="#ccc" stroke-width=".7"/>
      ${women.map(([n], i) => i % 3 ? nothing : svg`<text x="68" y=${ry(i) + 4} text-anchor="end">${n}</text>`)}
      ${[0, 5, 10, 15, 20].map((v) => svg`<text x=${x0 + v * unit} y="236" text-anchor="middle">${v}</text>`)}
      <text class="ti" x="181" y="37" text-anchor="middle">女</text>
      <path d="M284 147h4v4h-4z" fill="#5b9bd5"/><text class="lg" x="289" y="152">女</text></svg>
      <button class="pill" aria-label="値"></button><button class="k1">都道府県 ${caret}</button><button class="l1">性別 ${I.filter}</button></figure>`;
  }

  private areaChart() {
    const x0 = 18, base = 185, unit = 7.4, step = 253 / 46;
    const pts = women.map(([, v], i) => `${x0 + i * step} ${base - v * unit}`).join("L");
    return html`<figure class="chart c2"><svg class="plot" viewBox="0 0 319 244">${this.backdrop("g2")}
      ${range(1, 9).map((k) => svg`<path d="M${x0} ${base - k * 2 * unit}h253" stroke="#626262"/>`)}
      <path d="M${x0} ${base}L${pts}V${base}z" fill="url(#g2a)"/>
      <path d="M${x0} ${base + 0.5}h253" stroke="#ccc"/>
      <path d=${women.map((_, i) => `M${x0 + i * step} ${base}v3`).join("")} stroke="#aaa" stroke-width=".7"/>
      ${range(0, 9).map((k) => svg`<text x="12" y=${base + 3 - k * 2 * unit} text-anchor="end">${k * 2}</text>`)}
      ${women.map(([n], i) => i % 2 ? nothing : svg`<text transform="translate(${x0 + i * step + 3} 190) rotate(-90)" text-anchor="end">${n}</text>`)}
      <text class="ti" x="159" y="37" text-anchor="middle">女</text>
      <path d="M283 139h4v4h-4z" fill="#5b9bd5"/><text class="lg" x="288" y="144">女</text></svg>
      <button class="pill" aria-label="値"></button><button class="k2">都道府県 ${caret}</button><button class="l2">性別 ${I.filter}</button></figure>`;
  }

  private chartWindow() {
    const rest = range(4, 19).map(() => html`<td></td>`);
    const all = html`<td></td><td></td><td></td>${rest}`;
    const dd = html`<span class="dd">${I.sorted}</span>`;
    return html`<section class="win four">
      ${this.quick()}
      ${this.tabs(["ホーム", "挿入", "ページ レイアウト", "数式", "データ", "校閲", "表示", "開発"], "ホーム")}
      <div class="ribbon">${this.home("4")}${this.number("4")}</div>
      ${this.formula("U54", "")}
      <div class="view v4"><table class="sheet">${pct([18, 98, 54, 27, 28, 18, 35, 21, 18, 35, 22, 17, 35, 22, 17, 36, 22, 17, 35, 21])}
        ${this.head(range(0, 18).map(letter))}
        <tbody>
          <tr><th>1</th>${all}</tr><tr><th>2</th>${all}</tr>
          <tr class="pv"><th>3</th><td class="q"></td><td class="q"><div class="cell">列ラベル${dd}</div></td><td class="q"></td>${rest}</tr>
          <tr class="pv"><th>4</th><td class="q"><div class="cell">行ラベル${dd}</div></td><td class="q">女</td><td class="q">総計</td>${rest}</tr>
          ${women.map(([n, v], i) => html`<tr><th>${i + 5}</th><td class="q">${n}</td><td class="q n">${v}</td><td class="q n">${v}</td>${rest}</tr>`)}
          <tr class="pv"><th>52</th><td class="q">総計</td><td class="q n">498</td><td class="q n">498</td>${rest}</tr>
          <tr><th>53</th>${all}</tr><tr><th class="cur">54</th>${all}</tr><tr><th>&nbsp;</th>${all}</tr>
        </tbody></table>
        ${this.barChart()}${this.areaChart()}</div>
    </section>`;
  }

  render() {
    return html`<main class="page">
      <div><div class="top">${this.tableWindow()}${this.averageWindow()}</div>${this.ageWindow()}</div>
      ${this.chartWindow()}
    </main>`;
  }
}
